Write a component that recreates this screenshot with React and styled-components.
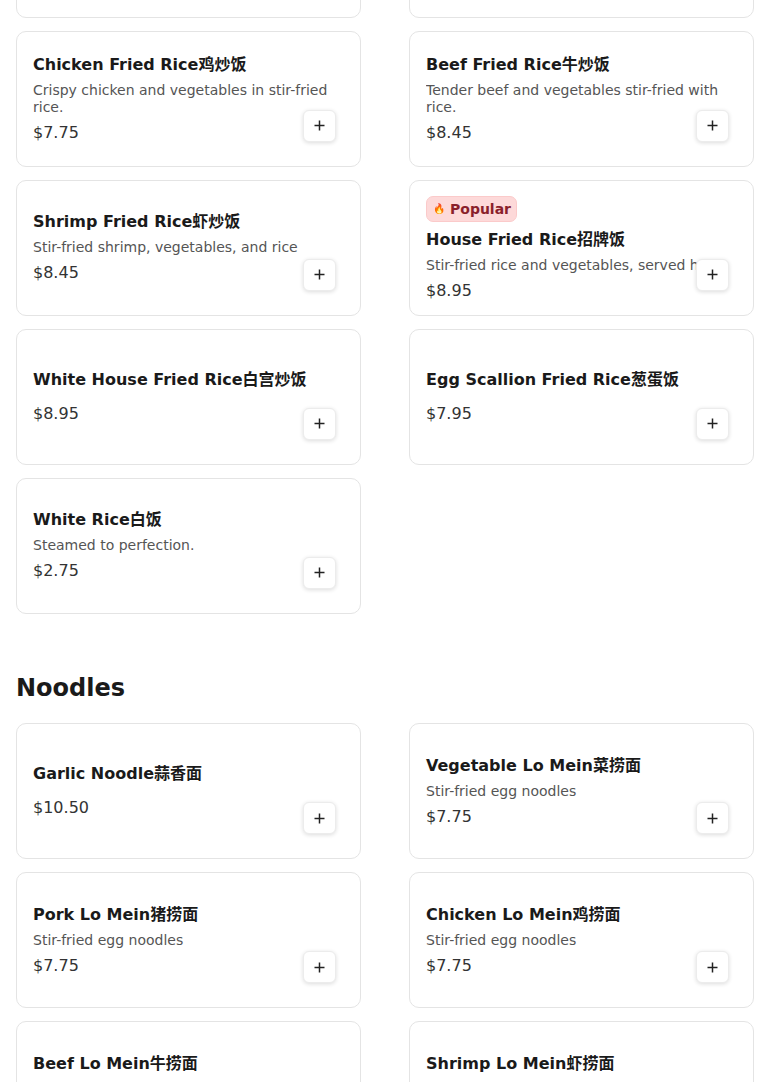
import React from "react";
import styled, { createGlobalStyle } from "styled-components";

const GlobalStyle = createGlobalStyle`
  * { box-sizing: border-box; }
  html, body { margin: 0; padding: 0; background: #ffffff; }
  body {
    font-family: "DejaVu Sans", "Noto Sans CJK SC", sans-serif;
    color: #1a1a1a;
    overflow: hidden;
  }
`;

const Page = styled.main`
  padding: 0 16px 40px;
  margin-top: -118.5px;
`;

const Section = styled.section`
  margin-top: ${(p) => (p.$first ? "0" : "56px")};
`;

const SectionTitle = styled.h2`
  margin: 0 0 17.5px;
  font-size: 24px;
  line-height: 36px;
  font-weight: 700;
  color: #1a1a1a;
`;

const Grid = styled.div`
  display: grid;
  grid-template-columns: 1fr 1fr;
  column-gap: 48px;
  row-gap: 13px;
`;

const Card = styled.article`
  position: relative;
  height: 136px;
  background: #ffffff;
  border: 1px solid #e4e4e4;
  border-radius: 10px;
  display: flex;
  flex-direction: column;
  justify-content: center;
  padding: 0 24px 0 16px;
  overflow: hidden;
`;

const Badge = styled.span`
  align-self: flex-start;
  display: inline-flex;
  align-items: center;
  gap: 5px;
  height: 26px;
  padding: 0 5px 0 6px;
  margin: 3px 0 6px;
  background: #fdd9d9;
  border: 1px solid #fbcaca;
  border-radius: 7px;
  color: #8a1f2b;
  font-size: 14px;
  font-weight: 700;
`;

const BadgeIcon = styled.span`
  font-size: 10px;
  line-height: 1;
`;

const Title = styled.h3`
  margin: 0 0 5px;
  font-size: 16px;
  line-height: 24px;
  font-weight: 700;
  color: #1a1a1a;
  white-space: nowrap;
`;

const Desc = styled.p`
  margin: 0;
  font-size: 14px;
  line-height: 17px;
  color: #555555;
  white-space: ${(p) => (p.$clip ? "nowrap" : "normal")};
  overflow: hidden;
`;

const Price = styled.div`
  margin-top: 5px;
  font-size: 16px;
  line-height: 24px;
  color: #333333;
`;

const AddButton = styled.button`
  position: absolute;
  right: 24px;
  bottom: 24px;
  width: 33px;
  height: 32px;
  padding: 0;
  display: flex;
  align-items: center;
  justify-content: center;
  background: #ffffff;
  border: 1px solid #ececec;
  border-radius: 6px;
  box-shadow: 0 1px 4px rgba(0, 0, 0, 0.14);
  color: #222222;
  cursor: pointer;
`;

const PlusIcon = () => (
  <svg width="11" height="11" viewBox="0 0 11 11" aria-hidden="true">
    <path d="M5.5 0.5v10M0.5 5.5h10" stroke="currentColor" strokeWidth="1.5" />
  </svg>
);

const rice = [
  { name: "Vegetable Fried Rice", zh: "菜炒饭", desc: "Fresh vegetables stir-fried with rice.", price: "7.25" },
  { name: "Pork Fried Rice", zh: "猪炒饭", desc: "Roast pork and vegetables stir-fried with rice.", price: "7.75" },
  { name: "Chicken Fried Rice", zh: "鸡炒饭", desc: "Crispy chicken and vegetables in stir-fried rice.", price: "7.75" },
  { name: "Beef Fried Rice", zh: "牛炒饭", desc: "Tender beef and vegetables stir-fried with rice.", price: "8.45" },
  { name: "Shrimp Fried Rice", zh: "虾炒饭", desc: "Stir-fried shrimp, vegetables, and rice", price: "8.45" },
  { name: "House Fried Rice", zh: "招牌饭", desc: "Stir-fried rice and vegetables, served hot", price: "8.95", popular: true, clip: true },
  { name: "White House Fried Rice", zh: "白宫炒饭", price: "8.95" },
  { name: "Egg Scallion Fried Rice", zh: "葱蛋饭", price: "7.95" },
  { name: "White Rice", zh: "白饭", desc: "Steamed to perfection.", price: "2.75" },
];

const noodles = [
  { name: "Garlic Noodle", zh: "蒜香面", price: "10.50" },
  { name: "Vegetable Lo Mein", zh: "菜捞面", desc: "Stir-fried egg noodles", price: "7.75" },
  { name: "Pork Lo Mein", zh: "猪捞面", desc: "Stir-fried egg noodles", price: "7.75" },
  { name: "Chicken Lo Mein", zh: "鸡捞面", desc: "Stir-fried egg noodles", price: "7.75" },
  { name: "Beef Lo Mein", zh: "牛捞面", desc: "Stir-fried egg noodles", price: "8.45" },
  { name: "Shrimp Lo Mein", zh: "虾捞面", desc: "Stir-fried egg noodles", price: "8.45" },
];

function MenuCard({ item }) {
  return (
    <Card>
      {item.popular && (
        <Badge>
          <BadgeIcon>🔥</BadgeIcon>
          <span>Popular</span>
        </Badge>
      )}
      <Title>
        {item.name}
        {item.zh}
      </Title>
      {item.desc && <Desc $clip={item.clip}>{item.desc}</Desc>}
      <Price>${item.price}</Price>
      <AddButton aria-label={`Add ${item.name}`}>
        <PlusIcon />
      </AddButton>
    </Card>
  );
}

export default function App() {
  return (
    <>
      <GlobalStyle />
      <Page>
        <Section $first>
          <Grid>
            {rice.map((item) => (
              <MenuCard key={item.name} item={item} />
            ))}
          </Grid>
        </Section>
        <Section>
          <SectionTitle>Noodles</SectionTitle>
          <Grid>
            {noodles.map((item) => (
              <MenuCard key={item.name} item={item} />
            ))}
          </Grid>
        </Section>
      </Page>
    </>
  );
}
